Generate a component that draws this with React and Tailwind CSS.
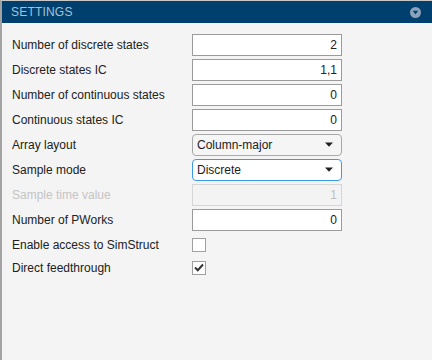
import React from "react";

const font = { fontFamily: '"Liberation Sans", Arial, sans-serif' };

function Row({ label, disabled, className = "", children }) {
  return (
    <div className={`flex items-center h-[25px] ${className}`}>
      <div className={`w-[192px] pl-[12px] text-[12px] ${disabled ? "text-[#c4c4c4]" : "text-[#212121]"}`}>{label}</div>
      <div className="w-[150px]">{children}</div>
    </div>
  );
}

function Input({ value, disabled }) {
  return (
    <div
      className={`h-[22px] border flex items-center justify-end pr-[4px] text-[12px] ${
        disabled ? "bg-[#f3f3f3] border-[#d6d6d6] text-[#c0c0c0]" : "bg-white border-[#9b9b9b] text-[#212121]"
      }`}
    >
      {value}
    </div>
  );
}

function Select({ value, focused }) {
  return (
    <div
      className={`h-[22px] border rounded-[4px] flex items-center justify-between pl-[4px] pr-[8px] text-[12px] text-[#212121] ${
        focused ? "bg-white border-[#3d9ae6]" : "bg-[#f5f5f5] border-[#a8a8a8]"
      }`}
    >
      <span>{value}</span>
      <svg width="8" height="5" viewBox="0 0 8 5">
        <path d="M0 0.5 H8 L4 4.8 Z" fill="#212121" />
      </svg>
    </div>
  );
}

function Check({ checked }) {
  return (
    <div className="w-[14px] h-[14px] border border-[#a0a0a0] bg-white flex items-center justify-center">
      {checked && (
        <svg width="10" height="9" viewBox="0 0 10 9">
          <path d="M1 4.5 L3.8 7.2 L9 1.5" stroke="#333" strokeWidth="2" fill="none" />
        </svg>
      )}
    </div>
  );
}

export default function App() {
  return (
    <div className="w-[432px] h-[360px] bg-[#f4f4f4] border-l-[2px] border-[#a3a3a3] border-t border-t-[#c8c8c8] overflow-hidden" style={font}>
      <div className="h-[22px] bg-[#00406f] flex items-center justify-between pl-[9px] pr-[11px]">
        <span className="text-[12px] text-[#a9c0d6] tracking-[0.2px]">SETTINGS</span>
        <svg width="11" height="11" viewBox="0 0 11 11">
          <circle cx="5.5" cy="5.5" r="5.5" fill="#8aa2bb" />
          <path d="M2.8 3.8 H8.2 L5.5 7.6 Z" fill="#00406f" />
        </svg>
      </div>
      <div className="pt-[9px] -ml-[2px]">
        <Row label="Number of discrete states"><Input value="2" /></Row>
        <Row label="Discrete states IC"><Input value="1,1" /></Row>
        <Row label="Number of continuous states"><Input value="0" /></Row>
        <Row label="Continuous states IC"><Input value="0" /></Row>
        <Row label="Array layout"><Select value="Column-major" /></Row>
        <Row label="Sample mode"><Select value="Discrete" focused /></Row>
        <Row label="Sample time value" disabled><Input value="1" disabled /></Row>
        <Row label="Number of PWorks"><Input value="0" /></Row>
        <Row label="Enable access to SimStruct"><Check /></Row>
        <Row label="Direct feedthrough" className="-mt-[2px]"><Check checked /></Row>
      </div>
    </div>
  );
}
